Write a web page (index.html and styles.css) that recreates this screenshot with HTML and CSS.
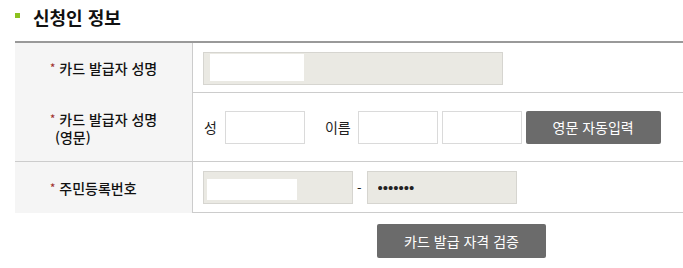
FILE: index.html
```html
<!DOCTYPE html>
<html lang="ko">
<head>
<meta charset="utf-8">
<title>신청인 정보</title>
<link rel="stylesheet" href="styles.css">
</head>
<body>
<div class="page">
  <h2 class="title"><span class="bullet"></span>신청인 정보</h2>
  <div class="form">
    <div class="row row1">
      <div class="label"><span class="req">*</span> 카드 발급자 성명</div>
      <div class="cell">
        <div class="field wide"><span class="mask mask1"></span></div>
      </div>
    </div>
    <div class="row row2">
      <div class="label"><span class="req">*</span> 카드 발급자 성명<br><span class="sub">(영문)</span></div>
      <div class="cell">
        <span class="txt t1">성</span>
        <input class="inp w80" type="text">
        <span class="txt t2">이름</span>
        <input class="inp w80" type="text">
        <input class="inp w80 g4" type="text">
        <button class="btn g4" type="button">영문 자동입력</button>
      </div>
    </div>
    <div class="row row3">
      <div class="label"><span class="req">*</span> 주민등록번호</div>
      <div class="cell">
        <div class="field mid"><span class="mask mask2"></span></div>
        <span class="dash">-</span>
        <input class="inp mid pw" type="password" value="1234567">
      </div>
    </div>
  </div>
  <div class="actions">
    <button class="btn big" type="button">카드 발급 자격 검증</button>
  </div>
</div>
</body>
</html>
```
FILE: styles.css
```css
html, body {
  margin: 0;
  padding: 0;
  background: #fff;
}
body {
  font-family: "Noto Sans CJK KR", "Noto Sans", sans-serif;
  color: #222;
  font-size: 14px;
}
.page {
  padding-left: 15px;
}
.title {
  margin: 0;
  height: 41px;
  box-sizing: border-box;
  padding-bottom: 8px;
  display: flex;
  align-items: center;
  font-size: 18px;
  font-weight: bold;
  color: #111;
  line-height: 22px;
}
.bullet {
  width: 5px;
  height: 5px;
  background: #8cc21f;
  margin-right: 13px;
  margin-bottom: 3px;
}
.form {
  border-top: 2px solid #999;
}
.row {
  display: grid;
  grid-template-columns: 178px 1fr;
  border-bottom: 1px solid #ccc;
}
.row1 { height: 49px; }
.row2 { height: 68px; }
.row3 { height: 50px; }
.label {
  background: #f5f5f5;
  border-right: 1px solid #ccc;
  display: block;
  padding-left: 35px;
  line-height: 18px;
  font-size: 14px;
  font-weight: 500;
  color: #111;
}
.row1 .label { line-height: 49px; }
.row3 .label { line-height: 50px; }
.row2 .label { padding-top: 16px; box-sizing: border-box; }
.req {
  color: #a0302c;
  font-size: 11px;
  vertical-align: 2px;
}
.sub {
  padding-left: 5px;
}
.cell {
  display: flex;
  align-items: center;
  padding-left: 10px;
}
.field {
  box-sizing: border-box;
  height: 33px;
  background: #eae9e3;
  border: 1px solid #d6d5d0;
  display: flex;
  align-items: flex-start;
}
.wide { width: 300px; }
.mid { width: 150px; }
.mask {
  background: #fff;
  display: block;
}
.mask1 {
  width: 94px;
  height: 27px;
  margin: 1px 0 0 6px;
}
.mask2 {
  width: 90px;
  height: 21px;
  margin: 7px 0 0 3px;
}
.txt {
  font-size: 14px;
  color: #222;
}
.t1 { margin-right: 8px; margin-left: 1px; }
.t2 { margin-left: 20px; margin-right: 7px; }
.inp {
  box-sizing: border-box;
  height: 33px;
  border: 1px solid #dadada;
  background: #fff;
  margin: 0;
  padding: 0 10px;
  outline: none;
}
.w80 { width: 80px; }
.g4 { margin-left: 4px; }
.dash {
  margin: 0 5px 0 4px;
  font-size: 13px;
}
.pw {
  background: #eae9e3;
  border-color: #d6d5d0;
  font-family: "Liberation Sans", sans-serif;
  font-size: 15px;
  color: #222;
}
.btn {
  box-sizing: border-box;
  height: 33px;
  width: 135px;
  border: 0;
  border-radius: 2px;
  background: #6b6b6b;
  color: #fff;
  font-family: "Noto Sans CJK KR", sans-serif;
  font-size: 14px;
  padding: 0;
}
.actions {
  padding: 11px 0 0 362px;
}
.big {
  width: 169px;
  height: 34px;
}
```
